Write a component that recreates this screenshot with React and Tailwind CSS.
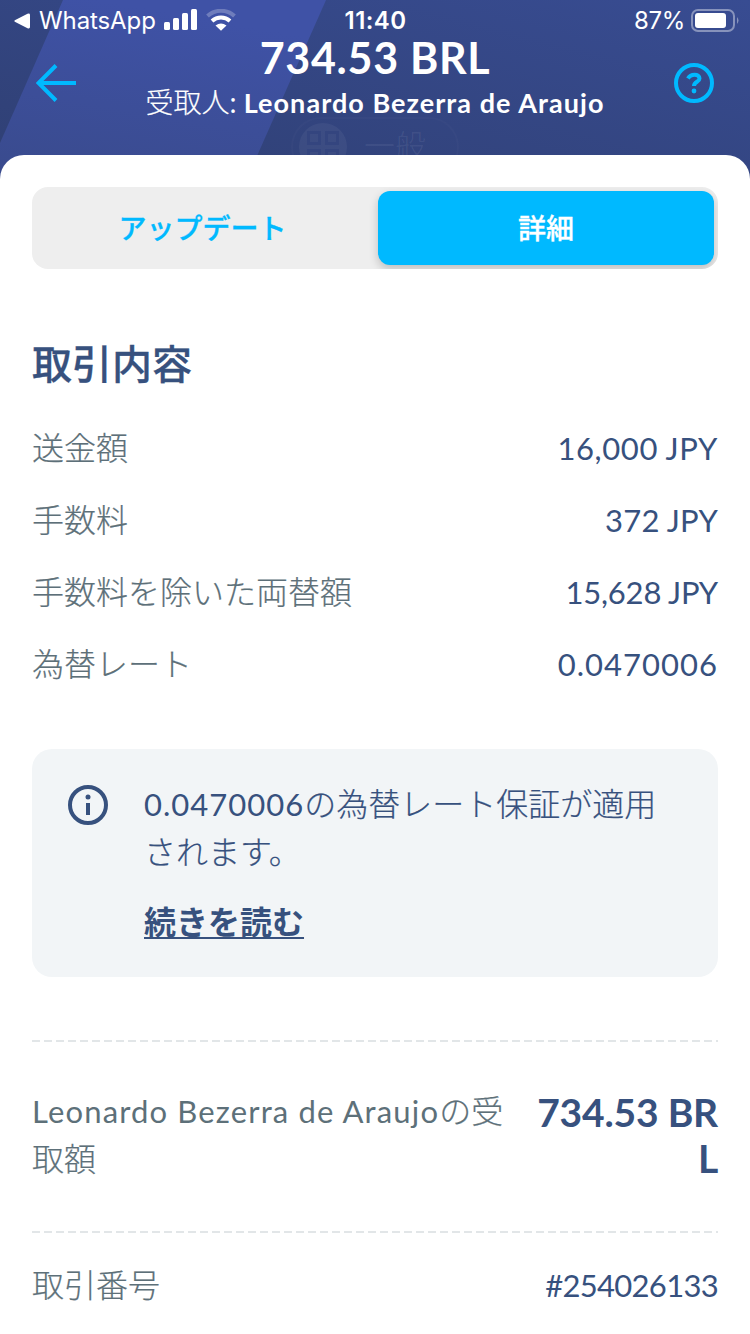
import React from "react"

const rows = [
    { label: '送金額', value: '16,000 JPY', tracking: 'tracking-[0.6px]' },
    { label: '手数料', value: '372 JPY', tracking: 'tracking-[0.2px]' },
    { label: '手数料を除いた両替額', value: '15,628 JPY', tracking: 'tracking-[-0.2px]' },
    { label: '為替レート', value: '0.0470006', tracking: 'tracking-[1px]' },
];

const StatusBar = () => (
    <div className="grid h-[33px] grid-cols-3 items-center pl-[14px] pr-[11px] pt-[7px] font-['Inter','Liberation_Sans',sans-serif] text-[24px] leading-[26px]">
        <div className="flex items-center">
            <svg width="16" height="16" viewBox="0 0 16 16" fill="#fff">
                <path d="M1.3 7 13.5.8Q16 0 16 2v12q0 2-2.500 1.200L1.300 9q-2-1 0-2Z" />
            </svg>
            <span className="ml-[9px] w-[117px] pt-px tracking-[-0.1px]">WhatsApp</span>
            <svg className="-mt-px ml-2" width="34" height="22" viewBox="0 0 34 22" fill="#fff">
                <rect x="0" y="13" width="6" height="8" rx="1.5" />
                <rect x="9" y="9" width="6" height="12" rx="1.5" />
                <rect x="18" y="4" width="6" height="17" rx="1.5" />
                <rect x="27" y="0" width="6" height="21" rx="1.5" />
            </svg>
            <svg className="-mt-px ml-2" width="30" height="22" viewBox="0 0 30 22" fill="none" stroke="#fff">
                <path d="M1.500 7a20 20 0 0 1 27 0" strokeWidth="4" opacity=".25" />
                <path d="M6 12a13.500 13.500 0 0 1 18 0" strokeWidth="4" />
                <path d="M9.500 16.500q5.500-4 11 0L15 21.800Z" fill="#fff" stroke="none" />
            </svg>
        </div>
        <span className="-ml-[2px] pt-px text-center font-semibold tracking-[0.4px]">11:40</span>
        <div className="flex items-center justify-end">
            <span className="pt-px tracking-[-0.3px]">87%</span>
            <svg className="ml-[6px]" width="48" height="24" viewBox="0 0 48 24">
                <rect x="1" y="1" width="42" height="21" rx="6" fill="none" stroke="#fff" strokeOpacity=".4" strokeWidth="2" />
                <rect x="4" y="4" width="31" height="15" rx="3" fill="#fff" />
                <path d="M46 8q3 3.500 0 7Z" fill="#fff" fillOpacity=".4" />
            </svg>
        </div>
    </div>
);

// Japanese body copy, a touch heavier than the light cut
const Jp = ({ children }) => (
    <span className="font-light [-webkit-text-stroke:0.2px_currentColor]">{children}</span>
);

const Header = () => (
    <header className="relative h-[190px] overflow-hidden bg-linear-to-tr from-[#2f3f72] to-[#384c92] text-white">
        <svg className="absolute inset-0" width="750" height="190" viewBox="0 0 750 190">
            <defs>
                <linearGradient id="band" x1="0" y1="1" x2="0.3" y2="0">
                    <stop offset="0" stopColor="#394a8b" />
                    <stop offset="1" stopColor="#3f52a6" />
                </linearGradient>
            </defs>
            <path d="M63 0H326L242 190H0V143Z" fill="url(#band)" />
        </svg>
        <div className="absolute left-[291px] top-[117px] flex h-[60px] w-[168px] items-center rounded-full border-2 border-white/2 pl-[6px]">
            <svg width="48" height="48" viewBox="0 0 48 48" fill="none">
                <circle cx="24" cy="24" r="24" fill="#fff" fillOpacity=".05" />
                <path d="M9.500 9.500h11v11h-11zM27.500 9.500h11v11h-11zM9.500 27.500h11v11h-11zM27.500 27.500h11v11h-11z" stroke="#34457f" strokeWidth="3" />
            </svg>
            <span className="-mt-1 ml-[17px] text-[31px] font-light text-white/8">一般</span>
        </div>
        <div className="relative">
            <StatusBar />
            <div className="flex h-[100px] items-center justify-between px-9">
                <svg width="40" height="38" viewBox="0 0 40 38" fill="none" stroke="#00b9ff" strokeWidth="4">
                    <path d="M40 19H3M20 1.500 2.500 19 20 36.500" />
                </svg>
                <div className="-mt-[5px] text-center">
                    <h1 className="text-[43px] font-bold leading-[42px] tracking-[0.7px]">734.53 BRL</h1>
                    <p className="mt-px text-[28px] leading-[44px]">
                        <Jp>受取人</Jp>
                        <span>: </span>
                        <span className="text-[27px] font-bold tracking-[1.05px]">Leonardo Bezerra de Araujo</span>
                    </p>
                </div>
                <svg width="40" height="40" viewBox="0 0 40 40" fill="none" stroke="#00b9ff" strokeWidth="4">
                    <circle cx="20" cy="20" r="18" />
                    <path d="M14 15.500C16.500 10.500 25.500 10.500 25.500 15.500 25.500 19 20 18.500 20 23" />
                    <circle cx="20" cy="28" r="2.400" fill="#00b9ff" stroke="none" />
                </svg>
            </div>
        </div>
    </header>
);

const Divider = () => (
    <div className="h-[2px] bg-[repeating-linear-gradient(to_right,#e2e6e8_0px,#e2e6e8_8px,transparent_8px,transparent_12px)]"></div>
);

const App = () => {
    return (
        <div className="h-[1334px] w-[750px] overflow-hidden bg-white font-['Lato','Noto_Sans_CJK_JP',sans-serif] text-[31px] text-[#37517e]">
            <Header />
            <main className="relative -mt-[35px] h-[1179px] rounded-t-[24px] bg-white px-8 pt-8">
                {/* Tabs */}
                <div className="grid h-[82px] grid-cols-2 overflow-hidden rounded-[16px] bg-[#eeeeee] p-1 text-[28px] font-medium">
                    <button className="pr-[6px] text-[#00b9ff] [-webkit-text-stroke:0.3px_currentColor]">アップデート</button>
                    <button className="ml-[3px] rounded-[12px] bg-[#00b9ff] text-white shadow-[0_4px_10px_rgba(0,0,0,0.2)] [-webkit-text-stroke:0.3px_currentColor]">詳細</button>
                </div>

                <h2 className="mt-[67px] text-[40px] font-medium leading-[56px] [-webkit-text-stroke:0.3px_currentColor]">取引内容</h2>

                <div className="mt-[21px]">
                    {rows.map((row) => (
                        <div key={row.label} className="flex h-[72px] items-center justify-between">
                            <span className="-mt-[2px] text-[32px] text-[#5d7079]"><Jp>{row.label}</Jp></span>
                            <span className={`-mt-px ${row.tracking}`}>{row.value}</span>
                        </div>
                    ))}
                </div>

                {/* Guaranteed rate notice */}
                <div className="mt-[48px] flex h-[228px] rounded-[20px] bg-[#f2f5f7] pl-9 pt-[31px]">
                    <svg className="mt-[5px]" width="40" height="40" viewBox="0 0 40 40" fill="none" stroke="#37517e" strokeWidth="4">
                        <circle cx="20" cy="20" r="18" />
                        <path d="M20 18v12" />
                        <circle cx="20" cy="12" r="2.500" fill="#37517e" stroke="none" />
                    </svg>
                    <div className="ml-9 text-[32px] leading-[48px]">
                        <p><span className="text-[31px] tracking-[1px]">0.0470006</span><Jp>の為替レート保証が適用<br />されます。</Jp></p>
                        <p className="mt-[22px] font-bold underline decoration-2 underline-offset-[3px]">続きを読む</p>
                    </div>
                </div>

                <div className="mt-[63px]"><Divider /></div>
                <div className="flex h-[189px] justify-between pt-[45px]">
                    <p className="text-[32px] leading-[47px] text-[#5d7079]">
                        <span className="text-[31px] tracking-[1.15px]">Leonardo Bezerra de Araujo</span><Jp>の受<br />取額</Jp>
                    </p>
                    <p className="mt-[2px] text-right text-[39px] font-bold leading-[46px] tracking-[-0.2px]">734.53 BR<br />L</p>
                </div>
                <Divider />
                <div className="mt-[17px] flex h-[72px] items-center justify-between">
                    <span className="-mt-[2px] text-[32px] text-[#5d7079]"><Jp>取引番号</Jp></span>
                    <span className="-mt-px tracking-[-0.7px]">#254026133</span>
                </div>
            </main>
        </div>
    )
}

export default App;
